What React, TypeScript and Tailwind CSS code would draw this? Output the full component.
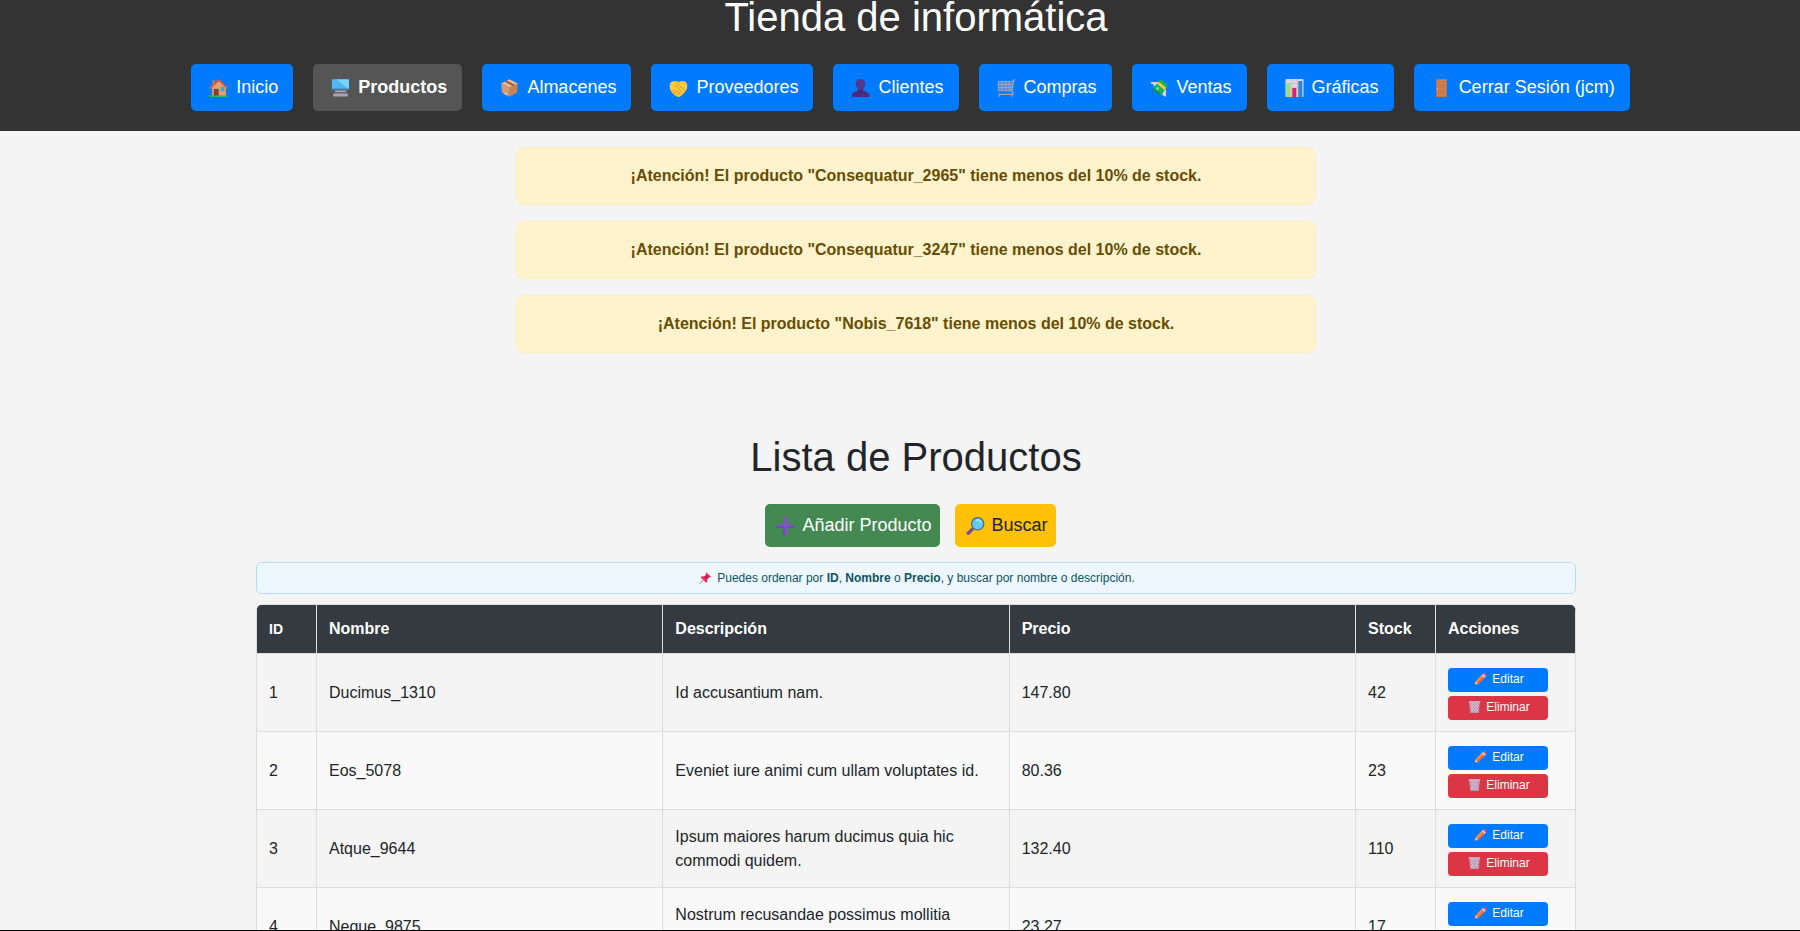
import type { ReactNode } from 'react';

const art: Record<string, ReactNode> = {
  house: (
    <>
      <rect x="2.8" y="1" width="2.6" height="6" fill="#a57a78" />
      <path d="M2.6 8 9.6 2l6.6 6v8.8H2.6z" fill="#e8a274" />
      <path d="M9.6 2v14.8h6.6V8z" fill="#ec9f66" />
      <rect x="4.2" y="9.8" width="5" height="7.2" fill="#7d4533" />
      <rect x="11.2" y="7.8" width="3.6" height="4.6" fill="#2fa8ec" />
      <path d="M.8 9 9.4 1.2 17.4 9" fill="none" stroke="#ea5b32" strokeWidth="1.7" strokeLinecap="round" strokeLinejoin="round" />
      <rect x="0" y="16.4" width="18" height="1.6" rx=".6" fill="#2fb865" />
    </>
  ),
  computer: (
    <>
      <rect x=".4" y=".2" width="17.2" height="10.4" rx=".6" fill="#4fb8f2" />
      <path d="M5 .6h12.2v9.4z" fill="#7ad4fb" />
      <rect x="0" y="9.6" width="18" height="1" fill="#3a78a8" />
      <rect x="5.4" y="10.6" width="7.2" height="1.2" fill="#706a7c" />
      <rect x="3.2" y="11.6" width="11.8" height="1.6" rx=".6" fill="#a9a3b3" />
      <rect x="6" y="13.2" width="6" height="1.4" fill="#736c80" />
      <rect x="1.6" y="14.6" width="14.8" height="3" rx=".8" fill="#aaa3b2" />
    </>
  ),
  box: (
    <>
      <path d="M.8 4.4 9 8.4v9.4L1.4 13.6z" fill="#d9986a" />
      <path d="M17.2 4.4 9 8.4v9.4l7.6-4.2z" fill="#c88354" />
      <path d="M.8 4.4 9 .2l8.2 4.2L9 8.6z" fill="#eeb888" />
      <path d="m4.2 2.8 8.2 4.1 2-1L6.4 1.7z" fill="#8a583c" />
      <path d="m4.2 13.4 2 1v1.8l-2-1.1z" fill="#f3e5dc" />
    </>
  ),
  handshake: (
    <>
      <path d="M3.6 2.2h4L9.4 3l2-.8h3.200C16.800 2.600 17.800 4.800 17.800 7c0 2.400-.8 4.200-2.200 5.800-1.600 2-3.400 3.600-5 4.600-1 .6-2 .6-3 .2C5.200 16.600 2.800 14.400 1.400 12 .4 10.200 0 8.600.2 6.600.4 4.200 1.600 2.400 3.600 2.200z" fill="#fcc93a" />
      <path d="M9.400 3.400 6 6.800c.6 1.400 2.400 1.400 4.200-.2l5.200 5.200M8.400 9.200l4.400 4.600M6.800 11.400l3.800 3.800" fill="none" stroke="#dc932c" strokeWidth=".8" strokeLinecap="round" strokeLinejoin="round" />
      <path d="m3.400 12.600 1.200-1.400M5.200 14.600l1.400-1.600M7.400 16.200l1.200-1.400" stroke="#f5a23a" strokeWidth="1.300" strokeLinecap="round" />
    </>
  ),
  person: (
    <>
      <path d="M6.600 9h5v4h-5z" fill="#41246a" />
      <path d="M4.400 4.400C4.400 1.600 6.200 0 9.100 0s4.700 1.600 4.700 4.400c0 3.400-2 6.600-4.700 6.600S4.400 7.800 4.400 4.400z" fill="#56358b" />
      <path d="M.2 18c0-4 2.600-6 6.200-6l2.700 1 2.700-1c3.600 0 6.200 2 6.200 6z" fill="#4c2c7b" />
    </>
  ),
  cart: (
    <>
      <path d="M1.200 2.600h14.200L14.400 12H1.200z" fill="#4f8ddd" />
      <path d="M17.800.8h-1.600L14.400 12.600l1.600 1.600-1 1.200H.8" fill="none" stroke="#a9a4b2" strokeWidth="1.200" strokeLinejoin="round" />
      <path d="M.6 2.400h15.400M.8 5.400h14.800M.8 8.400h14.400M.8 11.800h14M.8 2.400v9.400M4.400 2.400v9.400M8 2.400v9.400M11.600 2.400v9.400" fill="none" stroke="#a9a4b2" strokeWidth=".9" />
      <circle cx="1.800" cy="16.800" r="1" fill="#9a95a6" />
      <circle cx="14.600" cy="16.800" r="1" fill="#9a95a6" />
    </>
  ),
  money: (
    <>
      <path d="M0 3h7.600L6 7.400 2.800 6.800 3 5.200 1 5z" fill="#d9d2e2" />
      <path d="M15.400 18 9.400 14.600l4.200-5.200 2 1.600z" fill="#d9d2e2" />
      <path d="M10.400.2 17.400 6l-5.800 9.600-9-6.600z" fill="#16b35a" />
      <path d="m2.600 9 9 6.600-2.400.4-7.400-5.200z" fill="#0c8f47" />
      <path d="m6.400 4.400 1.800-1.600 7.400 6-1.400 2.400z" fill="#ffc83d" />
      <circle cx="7" cy="9.600" r="1.500" fill="#6fe0a0" />
    </>
  ),
  chart: (
    <>
      <rect width="18" height="18" rx="1" fill="#dcd5e4" />
      <path d="M0 4.600h18M0 9h18M0 13.400h18M5.800 0v18M11.800 0v18" stroke="#b9b1c4" strokeWidth=".6" />
      <rect x=".8" y="4" width="3.800" height="14" fill="#97e26d" />
      <rect x="6.800" y="9" width="4" height="9" fill="#d6246e" />
      <rect x="12.800" y="2" width="4" height="16" fill="#2f86d3" />
    </>
  ),
  door: (
    <>
      <rect x="3.600" y="0" width="10.800" height="18" rx=".5" fill="#bd6f48" />
      <rect x="4.400" y=".8" width="9.200" height="16.400" fill="#d6875a" />
      <path d="M5.800 2.400h6.400v4.200H5.800zM5.800 8.200h6.400v2.600H5.800zM5.800 12.600h6.400v3H5.800z" fill="#cf7f50" stroke="#b1673f" strokeWidth=".6" />
      <circle cx="5" cy="9.600" r=".7" fill="#ffd270" />
    </>
  ),
  plus: (
    <>
      <rect x="7.400" y="0" width="3.400" height="18" rx="1" fill="#8450cf" />
      <rect x="0" y="7.400" width="18" height="3.200" rx="1" fill="#8450cf" />
      <path d="M.4 10h7v7.400M10.800 10h6.800" fill="none" stroke="#5d3a9a" strokeWidth=".8" />
    </>
  ),
  magnifier: (
    <>
      <path d="m1.800 16.200 3.600-3.600" stroke="#83489a" strokeWidth="3.400" strokeLinecap="round" />
      <path d="m5 13 2-2" stroke="#6c5a7c" strokeWidth="1.600" />
      <circle cx="11.200" cy="6.800" r="6.100" fill="#5fcdf0" stroke="#4a6690" strokeWidth="1.300" />
      <path d="M10 3.400c1.800-.8 3.800 0 4.600 1.800" fill="none" stroke="#a9ebfb" strokeWidth="1.200" strokeLinecap="round" />
    </>
  ),
  pin: (
    <>
      <path d="m.6 17.400 6.600-7" stroke="#8d8799" strokeWidth="1.500" strokeLinecap="round" />
      <path d="m10.400.6 7 6.600-1.600 1-1.400-.2-3 3.200.4 3.400-1.800 1.600-8.400-8.200 1.800-1.800 3.400.4 3.200-3-.6-1.600z" fill="#f0285c" />
      <path d="m9.800 4.400 4.200 3.800-2.600 2.600-4.200-4z" fill="#c41f56" />
    </>
  ),
  pencil: (
    <>
      <path d="M.2 17.800 1.600 12.600 5.600 16.400z" fill="#ffd3a5" />
      <path d="M.2 17.800.8 15.600l1.600 1.600z" fill="#5a3a58" />
      <path d="M1.600 12.600 11 2.800 15.400 7 5.600 16.400z" fill="#ff8b3d" />
      <path d="m3.800 14.800 9.800-9.800 1.800 2L5.600 16.400z" fill="#ef6434" />
      <path d="m10.600 3.200 2.200-2.200 4.400 4.400L15 7.400z" fill="#cfc6e0" />
      <path d="M12.800 1C14.200-.4 16-.2 17.200 1c1.200 1.200 1.200 3 0 4.400z" fill="#f4505c" />
    </>
  ),
  trash: (
    <>
      <path d="M1.600 2h14.800l-1.600 15.400H3.200z" fill="#c27c9c" />
      <path d="m3 3 12 12.600M7 3l8 8M11 3l4.600 4.600M3 7.600l9 9.200M3.400 12l5 5M15 3 3 15.600M11 3 3 11M7 3 2.400 7.600M15 7.600l-9 9.200M15 12l-5 5" stroke="#d6cfe0" strokeWidth="1.300" />
      <path d="m1.600 2 1.600 15.400M16.400 2l-1.600 15.400" stroke="#aaa1b8" strokeWidth="1.300" />
      <rect x=".4" y=".4" width="17.200" height="2.400" rx=".8" fill="#cdc6d6" />
      <rect x="2.600" y="15.800" width="12.800" height="2" rx=".6" fill="#b3aac0" />
    </>
  ),
};

function Icon({ name, small = false }: { name: string; small?: boolean }) {
  return (
    <svg
      aria-hidden="true"
      viewBox="-3.5 0 25 18"
      className={small ? 'h-3 w-[17px] shrink-0' : 'h-[18px] w-[25px] shrink-0'}
    >
      {art[name]}
    </svg>
  );
}

const links = [
  { icon: 'house', label: 'Inicio' },
  { icon: 'computer', label: 'Productos', active: true },
  { icon: 'box', label: 'Almacenes' },
  { icon: 'handshake', label: 'Proveedores' },
  { icon: 'person', label: 'Clientes' },
  { icon: 'cart', label: 'Compras' },
  { icon: 'money', label: 'Ventas' },
  { icon: 'chart', label: 'Gráficas' },
  { icon: 'door', label: 'Cerrar Sesión (jcm)' },
];

const lowStock = ['Consequatur_2965', 'Consequatur_3247', 'Nobis_7618'];

const products = [
  { id: 1, name: 'Ducimus_1310', description: 'Id accusantium nam.', price: '147.80', stock: 42 },
  { id: 2, name: 'Eos_5078', description: 'Eveniet iure animi cum ullam voluptates id.', price: '80.36', stock: 23 },
  { id: 3, name: 'Atque_9644', description: 'Ipsum maiores harum ducimus quia hic commodi quidem.', price: '132.40', stock: 110 },
  { id: 4, name: 'Neque_9875', description: 'Nostrum recusandae possimus mollitia consequatur.', price: '23.27', stock: 17 },
];

const cell = 'border-r border-b border-[#ddd] px-3';

export default function App() {
  return (
    <div className="h-screen overflow-hidden border-b border-black bg-[#f4f4f4] font-['Liberation_Sans',Arial,sans-serif] text-base text-[#212529]">
      <header className="bg-[#333] pb-5 text-white">
        <h1 className="pl-8 text-center text-[40px] leading-[34px]">Tienda de informática</h1>
        <nav className="mt-[30px] pl-[21px]">
          <ul className="flex justify-center gap-5">
            {links.map((link) => (
              <li key={link.label}>
                <a
                  href="#"
                  className={
                    link.active
                      ? 'flex items-center gap-[5px] rounded-[5px] bg-[#555] px-[15px] py-2.5 text-[18px] leading-[27px] font-bold whitespace-nowrap'
                      : 'flex items-center gap-[5px] rounded-[5px] bg-[#007bff] px-[15px] py-2.5 text-[18px] leading-[27px] whitespace-nowrap'
                  }
                >
                  <Icon name={link.icon} />
                  {link.label}
                </a>
              </li>
            ))}
          </ul>
        </nav>
      </header>

      <section className="flex flex-col items-center gap-4 pt-4 pl-8">
        {lowStock.map((name) => (
          <p
            key={name}
            role="alert"
            className="w-full max-w-[800px] rounded-lg border border-[#ffeeba] bg-[#fff3cd] p-4 text-center leading-6 font-bold text-[#664d03]"
          >
            ¡Atención! El producto "{name}" tiene menos del 10% de stock.
          </p>
        ))}
      </section>

      <main className="pt-20 pl-8">
        <h2 className="text-center text-[40px] leading-[48px]">Lista de Productos</h2>
        <div className="mt-[23px] mr-[11px] flex justify-center gap-[15px] text-[18px] leading-[27px]">
          <a href="#" className="flex items-center gap-1 rounded-[5px] bg-[#438951] p-2 text-white">
            <Icon name="plus" />
            Añadir Producto
          </a>
          <a href="#" className="flex items-center gap-1 rounded-[5px] bg-[#ffc107] p-2">
            <Icon name="magnifier" />
            Buscar
          </a>
        </div>

        <div className="mx-auto mt-[15px] max-w-[1320px]">
          <div className="flex items-center justify-center gap-[3px] rounded-[5px] border border-[#b8daff] bg-[#eef7ff] py-1.5 text-xs leading-[18px] text-[#0c5460]">
            <Icon name="pin" small />
            <p>
              Puedes ordenar por <strong>ID</strong>, <strong>Nombre</strong> o <strong>Precio</strong>, y buscar por
              nombre o descripción.
            </p>
          </div>

          <div className="mt-2.5 overflow-hidden rounded-lg">
            <table className="w-full table-fixed border-separate border-spacing-0 border-t border-l border-[#ddd] text-left leading-6">
              <colgroup>
                <col className="w-[60px]" />
                <col />
                <col />
                <col />
                <col className="w-20" />
                <col className="w-[140px]" />
              </colgroup>
              <thead className="bg-[#343a40] text-white">
                <tr>
                  <th className={`${cell} py-3 text-sm leading-6`}>ID</th>
                  <th className={`${cell} py-3`}>Nombre</th>
                  <th className={`${cell} py-3`}>Descripción</th>
                  <th className={`${cell} py-3`}>Precio</th>
                  <th className={`${cell} py-3`}>Stock</th>
                  <th className={`${cell} py-3`}>Acciones</th>
                </tr>
              </thead>
              <tbody>
                {products.map((product) => (
                  <tr key={product.id} className="even:bg-[#f9f9f9]">
                    <td className={cell}>{product.id}</td>
                    <td className={cell}>{product.name}</td>
                    <td className={cell}>{product.description}</td>
                    <td className={cell}>{product.price}</td>
                    <td className={cell}>{product.stock}</td>
                    <td className={`${cell} pt-3.5 pb-[11px]`}>
                      <div className="flex w-[100px] flex-col gap-1 text-xs leading-[18px] text-white">
                        <a
                          href="#"
                          className="flex items-center justify-center gap-[3px] rounded bg-[#007bff] pt-0.5 pb-1"
                        >
                          <Icon name="pencil" small />
                          Editar
                        </a>
                        <button
                          type="button"
                          className="flex items-center justify-center gap-[3px] rounded bg-[#dc3545] pt-0.5 pb-1"
                        >
                          <Icon name="trash" small />
                          Eliminar
                        </button>
                      </div>
                    </td>
                  </tr>
                ))}
              </tbody>
            </table>
          </div>
        </div>
      </main>
    </div>
  );
}
